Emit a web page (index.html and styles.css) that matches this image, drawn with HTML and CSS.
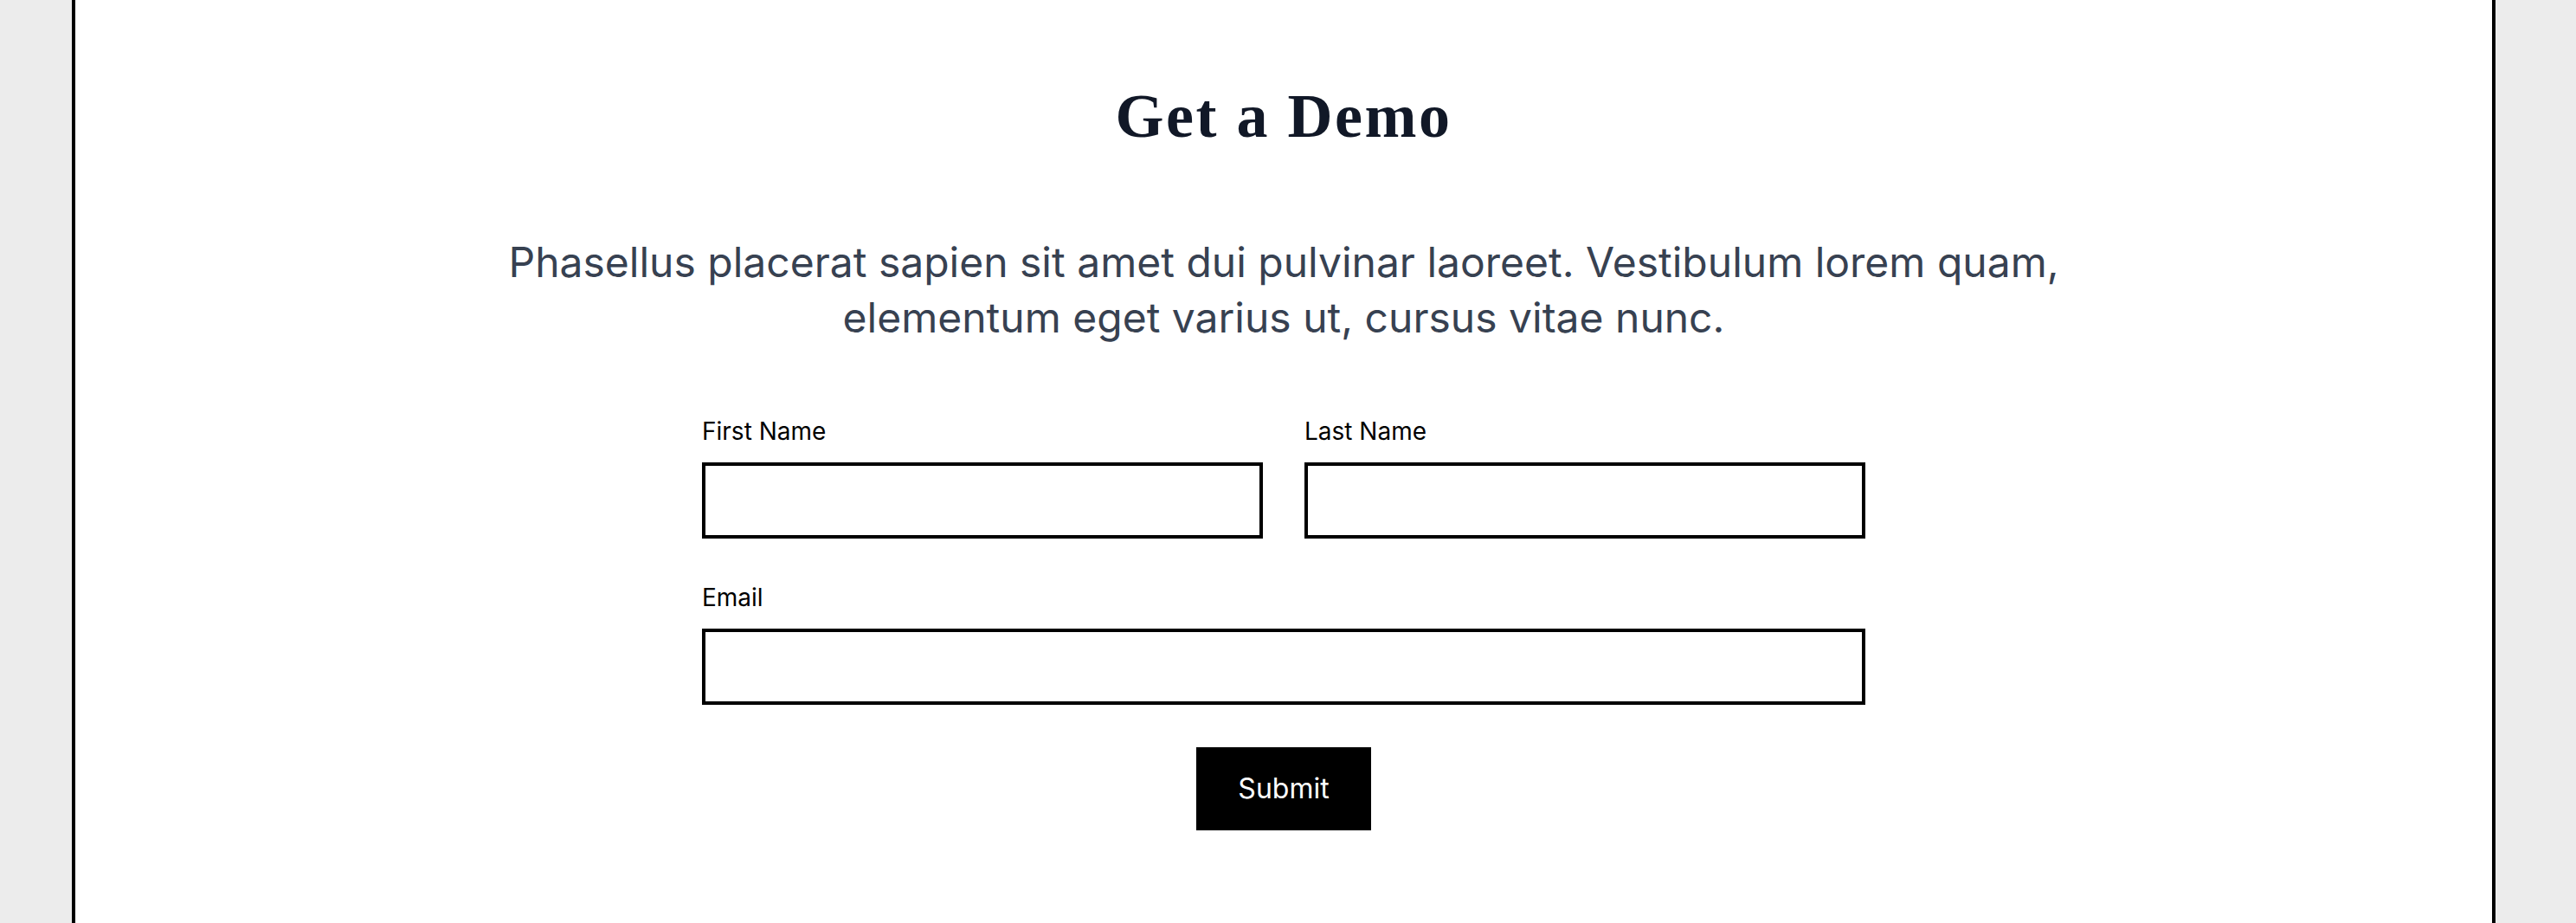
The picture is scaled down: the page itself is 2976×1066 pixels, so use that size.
FILE: index.html
```
<!DOCTYPE html>
<html lang="en">
<head>
<meta charset="utf-8">
<title>Get a Demo</title>
<link rel="stylesheet" href="styles.css">
</head>
<body>
<main class="frame">
  <section class="demo">
    <h1 class="demo-title">Get a Demo</h1>
    <p class="demo-lead">Phasellus placerat sapien sit amet dui pulvinar laoreet. Vestibulum lorem quam, elementum eget varius ut, cursus vitae nunc.</p>
    <form class="demo-form">
      <div class="form-row form-row-split">
        <label class="field">
          <span class="field-label">First Name</span>
          <input class="field-input" type="text">
        </label>
        <label class="field">
          <span class="field-label">Last Name</span>
          <input class="field-input" type="text">
        </label>
      </div>
      <div class="form-row">
        <label class="field">
          <span class="field-label">Email</span>
          <input class="field-input" type="email">
        </label>
      </div>
      <div class="form-actions">
        <button class="submit-btn" type="button">Submit</button>
      </div>
    </form>
  </section>
</main>
</body>
</html>
```
FILE: styles.css
```
* { box-sizing: border-box; }

html, body {
  margin: 0;
  padding: 0;
  height: 100%;
}

body {
  background: #ececec;
  font-family: Inter, "Noto Sans", sans-serif;
  overflow: hidden;
}

.frame {
  width: 2800px;
  min-height: 1066px;
  margin-left: 83px;
  background: #ffffff;
  border-left: 4px solid #000;
  border-right: 4px solid #000;
}

.demo {
  padding-top: 94px;
  display: flex;
  flex-direction: column;
  align-items: center;
}

.demo-title {
  margin: 0;
  font-family: "Liberation Serif", "Times New Roman", serif;
  font-weight: 700;
  font-size: 72px;
  line-height: 80px;
  letter-spacing: 2.5px;
  color: #111827;
  text-align: center;
}

.demo-lead {
  margin: 97px 0 0;
  max-width: 1820px;
  font-size: 48px;
  line-height: 64px;
  color: #374151;
  text-align: center;
}

.demo-form {
  margin-top: 81px;
  width: 1344px;
  display: flex;
  flex-direction: column;
}

.form-row {
  display: flex;
  gap: 48px;
}

.form-row + .form-row {
  margin-top: 50px;
}

.field {
  flex: 1 1 0;
  display: flex;
  flex-direction: column;
}

.field-label {
  font-size: 28px;
  line-height: 36px;
  color: #000;
  margin-bottom: 18px;
}

.field-input {
  height: 88px;
  width: 100%;
  border: 4px solid #000;
  border-radius: 0;
  background: #fff;
  font: inherit;
  font-size: 24px;
  padding: 0 16px;
  outline: none;
}

.form-actions {
  margin-top: 49px;
  display: flex;
  justify-content: center;
}

.submit-btn {
  width: 202px;
  height: 96px;
  background: #000;
  color: #fff;
  border: 0;
  border-radius: 0;
  font-family: Inter, "Noto Sans", sans-serif;
  font-size: 32px;
  line-height: 48px;
  padding: 0;
  cursor: pointer;
}
```
